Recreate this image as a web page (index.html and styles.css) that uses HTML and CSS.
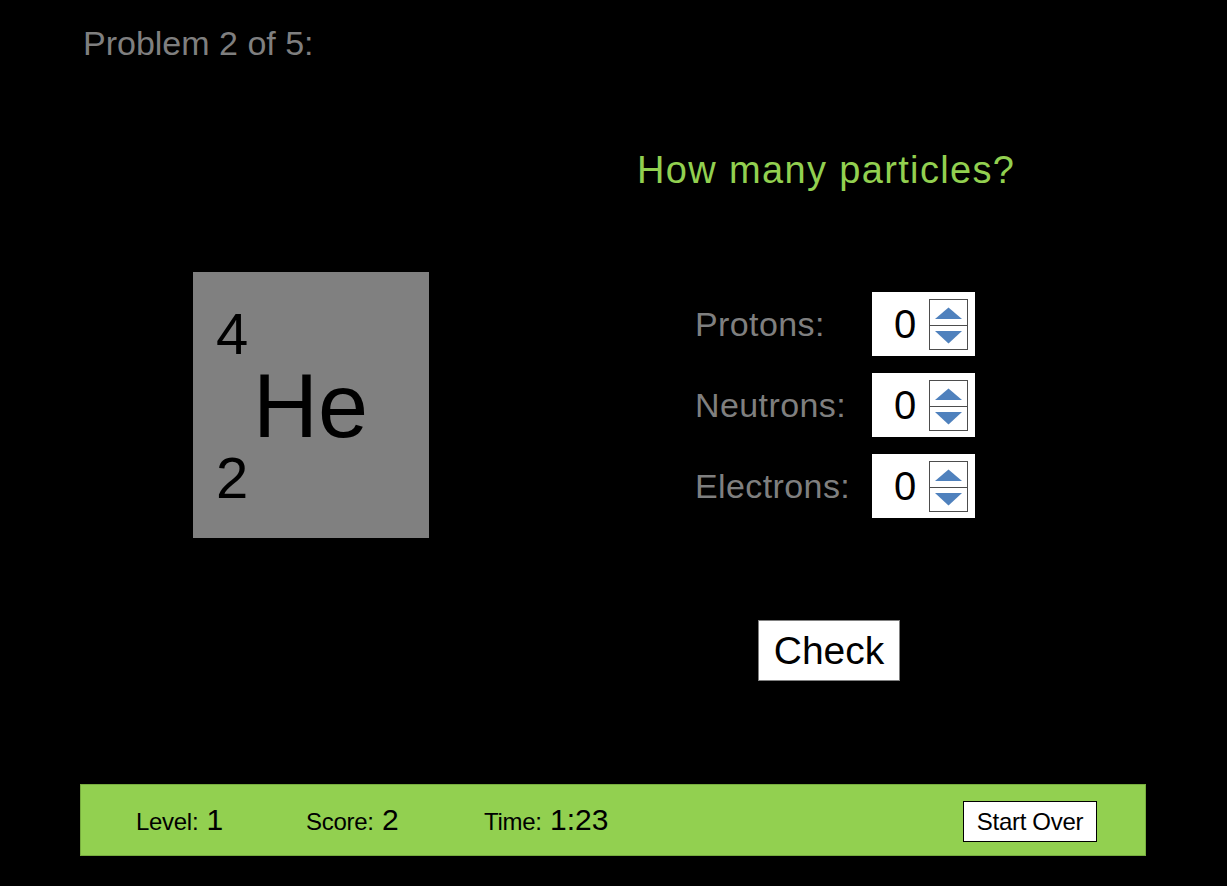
FILE: index.html
```html
<!DOCTYPE html>
<html>
<head>
<meta charset="utf-8">
<link rel="stylesheet" href="styles.css">
</head>
<body>
<div class="page">
  <div class="problem">Problem 2 of 5:</div>
  <div class="main">
    <div class="left">
      <div class="element">
        <div class="mass">4</div>
        <div class="symbol">He</div>
        <div class="number">2</div>
      </div>
    </div>
    <div class="right">
      <div class="question">How many particles?</div>
      <div class="rows">
        <div class="row">
          <div class="label">Protons:</div>
          <div class="spinbox">
            <span class="value">0</span>
            <svg class="spinner" width="39" height="51" viewBox="0 0 39 51"><rect x="0.5" y="0.5" width="38" height="50" fill="#fff" stroke="#4d4d4d"/><line x1="0" y1="26.5" x2="39" y2="26.5" stroke="#4d4d4d"/><polygon points="19.5,8.5 33,20 6,20" fill="#4f81bd"/><polygon points="6,32 33,32 19.5,44.5" fill="#4f81bd"/></svg>
          </div>
        </div>
        <div class="row">
          <div class="label">Neutrons:</div>
          <div class="spinbox">
            <span class="value">0</span>
            <svg class="spinner" width="39" height="51" viewBox="0 0 39 51"><rect x="0.5" y="0.5" width="38" height="50" fill="#fff" stroke="#4d4d4d"/><line x1="0" y1="26.5" x2="39" y2="26.5" stroke="#4d4d4d"/><polygon points="19.5,8.5 33,20 6,20" fill="#4f81bd"/><polygon points="6,32 33,32 19.5,44.5" fill="#4f81bd"/></svg>
          </div>
        </div>
        <div class="row">
          <div class="label">Electrons:</div>
          <div class="spinbox">
            <span class="value">0</span>
            <svg class="spinner" width="39" height="51" viewBox="0 0 39 51"><rect x="0.5" y="0.5" width="38" height="50" fill="#fff" stroke="#4d4d4d"/><line x1="0" y1="26.5" x2="39" y2="26.5" stroke="#4d4d4d"/><polygon points="19.5,8.5 33,20 6,20" fill="#4f81bd"/><polygon points="6,32 33,32 19.5,44.5" fill="#4f81bd"/></svg>
          </div>
        </div>
      </div>
      <div class="check">Check</div>
    </div>
  </div>
  <div class="bar">
    <div class="stat stat-level"><span class="stat-label">Level:</span> 1</div>
    <div class="stat stat-score"><span class="stat-label">Score:</span> 2</div>
    <div class="stat stat-time"><span class="stat-label">Time:</span> 1:23</div>
    <div class="restart">Start Over</div>
  </div>
</div>
</body>
</html>
```

FILE: styles.css
```css
html, body {
  margin: 0;
  padding: 0;
  background: #000;
}

body {
  font-family: "Liberation Sans", Arial, sans-serif;
}

.page {
  width: 1227px;
  height: 886px;
  display: flex;
  flex-direction: column;
  background: #000;
}

.problem {
  margin: 23px 0 0 83px;
  font-size: 34px;
  line-height: 40px;
  color: #7f7f7f;
}

.main {
  display: flex;
  height: 721px;
}

.left {
  width: 637px;
  box-sizing: border-box;
  padding: 209px 0 0 193px;
}

.element {
  width: 236px;
  height: 266px;
  box-sizing: border-box;
  background: #808080;
  color: #000;
  padding: 33px 0 0 23px;
}

.mass, .number {
  font-size: 58px;
  line-height: 58px;
}

.symbol {
  font-size: 90px;
  line-height: 86px;
  margin-left: 37px;
}

.right {
  flex: 1;
  padding-top: 84px;
}

.question {
  font-size: 38px;
  line-height: 46px;
  letter-spacing: 1.35px;
  color: #92d050;
}

.rows {
  margin: 99px 0 0 58px;
  display: flex;
  flex-direction: column;
  gap: 17px;
}

.row {
  display: flex;
  align-items: center;
  height: 64px;
}

.label {
  width: 177px;
  font-size: 34px;
  line-height: 64px;
  letter-spacing: 0.4px;
  color: #7f7f7f;
}

.spinbox {
  width: 103px;
  height: 64px;
  background: #fff;
  display: flex;
  align-items: center;
  box-sizing: border-box;
  padding-left: 22px;
}

.value {
  font-size: 40px;
  line-height: 64px;
  color: #000;
}

.spinner {
  display: block;
  margin-left: auto;
  margin-right: 7px;
  margin-top: 1px;
}

.check {
  margin: 102px 0 0 121px;
  width: 142px;
  height: 61px;
  box-sizing: border-box;
  border: 1px solid #808080;
  background: #fff;
  color: #000;
  font-size: 39px;
  line-height: 59px;
  text-align: center;
}

.bar {
  margin-left: 80px;
  width: 1066px;
  height: 72px;
  box-sizing: border-box;
  border: 1px solid #78ad3f;
  background: #92d050;
  display: flex;
  padding-left: 55px;
}

.stat {
  font-size: 30px;
  line-height: 70px;
  color: #000;
  white-space: nowrap;
}

.stat-label {
  font-size: 24px;
  letter-spacing: -0.3px;
}

.stat-level {
  width: 170px;
}

.stat-score {
  width: 178px;
}

.stat-time {
  flex: 1;
}

.restart {
  align-self: flex-start;
  margin: 16px 48px 0 0;
  width: 134px;
  height: 41px;
  box-sizing: border-box;
  border: 1px solid #000;
  background: #fff;
  font-size: 24px;
  line-height: 39px;
  letter-spacing: -0.3px;
  text-align: center;
  color: #000;
}
```
